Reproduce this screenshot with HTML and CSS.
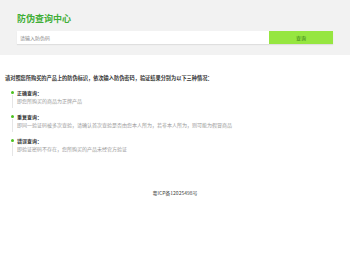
FILE: index.html
```html
<!DOCTYPE html>
<html lang="zh-CN">
<head>
<meta charset="utf-8">
<title>防伪查询中心</title>
<link rel="stylesheet" href="styles.css">
</head>
<body>
<header class="top">
  <h1 class="title">防伪查询中心</h1>
  <form class="search">
    <input class="search-input" type="text" placeholder="请输入防伪码">
    <button class="search-btn" type="button">查询</button>
  </form>
</header>
<main class="content">
  <p class="intro">请对照您所购买的产品上的防伪标识，依次输入防伪密码，验证结果分别为以下三种情况：</p>
  <ul class="list">
    <li class="item">
      <div class="marker"><span class="dot"></span><span class="line"></span></div>
      <div class="text">
        <div class="head">正确查询：</div>
        <div class="desc">即您所购买的商品为正牌产品</div>
      </div>
    </li>
    <li class="item">
      <div class="marker"><span class="dot"></span><span class="line"></span></div>
      <div class="text">
        <div class="head">重复查询：</div>
        <div class="desc">即同一验证码被多次查验，请确认首次查验是否由您本人所为，若非本人所为，则可能为假冒商品</div>
      </div>
    </li>
    <li class="item">
      <div class="marker"><span class="dot"></span><span class="line"></span></div>
      <div class="text">
        <div class="head">错误查询：</div>
        <div class="desc">即验证密码不存在，您所购买的产品未经官方验证</div>
      </div>
    </li>
  </ul>
  <footer class="footer">粤ICP备12025498号</footer>
</main>
</body>
</html>
```

FILE: styles.css
```css
* { box-sizing: border-box; }
body {
  margin: 0;
  background: #ffffff;
  font-family: "Noto Sans CJK SC", "Noto Sans", sans-serif;
  color: #333;
}
.top {
  background: #f2f2f2;
  height: 55px;
  padding: 12px 17px 0 17px;
}
.title {
  margin: 0;
  font-size: 9px;
  line-height: 13px;
  font-weight: bold;
  color: #3fae36;
  height: 19px;
}
.search {
  display: flex;
  width: 316px;
  height: 13px;
  margin: 0;
  box-shadow: 0 1px 1px rgba(0,0,0,0.08);
}
.search-input {
  flex: 1;
  min-width: 0;
  border: 0;
  margin: 0;
  padding: 0 0 0 3px;
  height: 13px;
  font-family: inherit;
  font-size: 5px;
  background: #fff;
  outline: none;
}
.search-input::placeholder { color: #888; }
.search-btn {
  width: 64px;
  height: 13px;
  border: 0;
  margin: 0;
  padding: 0;
  background: #96e640;
  color: #2f7a16;
  font-family: inherit;
  font-size: 5px;
}
.content {
  padding: 19px 5px 0 5px;
}
.intro {
  margin: 0 0 6px 0;
  font-size: 5.2px;
  line-height: 8px;
  font-weight: bold;
  color: #333;
}
.list {
  list-style: none;
  margin: 0;
  padding: 0;
}
.item {
  display: flex;
  height: 24px;
}
.marker {
  width: 12px;
  display: flex;
  flex-direction: column;
  align-items: flex-start;
  padding-left: 5.5px;
}
.dot {
  width: 3px;
  height: 3px;
  border-radius: 50%;
  background: #4cc21f;
  margin-top: 3px;
  flex: none;
}
.line {
  width: 1px;
  margin-left: 1px;
  margin-top: 1px;
  height: 13px;
  background: #e6e6e6;
}
.text { flex: 1; }
.head {
  font-size: 5px;
  line-height: 9px;
  font-weight: bold;
  color: #333;
}
.desc {
  font-size: 5px;
  line-height: 8px;
  color: #999;
}
.footer {
  margin-top: 29px;
  text-align: center;
  font-size: 5px;
  line-height: 8px;
  color: #444;
}
```
